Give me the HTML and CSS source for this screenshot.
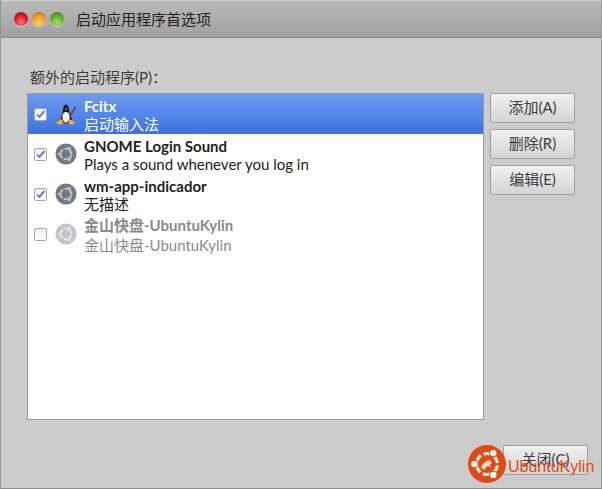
FILE: index.html
```html
<!DOCTYPE html>
<html>
<head>
  <title>启动应用程序首选项</title>
  <link rel="stylesheet" href="styles.css">
</head>
<body>

<div class="window">
  <div class="titlebar">
    <span class="dot red"></span>
    <span class="dot orange"></span>
    <span class="dot green"></span>
    <span class="title">启动应用程序首选项</span>
  </div>

  <div class="content">
    <div class="label">额外的启动程序(P)：</div>
    <div class="main">
      <div class="list">
        <div class="row selected">
          <span class="check on"><svg viewBox="0 0 13 13"><path d="M2.500 6.500 5.300 9.500 11 2.500" /></svg></span>
          <svg class="icon" viewBox="0 0 24 24">
            <path d="M17 13 22.500 4.500" stroke="#6b4120" stroke-width="1.800" fill="none"/>
            <path d="M6 19c0-3 1.500-5 2.200-8C8.800 8 8.300 2.500 12 1.500c3.700 1 3.200 6.500 3.800 9.500.7 3 2.700 5 2.700 8l-2 3H8z" fill="#17171c"/>
            <ellipse cx="12" cy="15.500" rx="4" ry="6" fill="#f4f2ec"/>
            <path d="M10.600 6h2.800l-1.400 1.800z" fill="#f0b020"/>
            <path d="M1 21.500 7.500 17.500 9.500 22.500 5 23.500zM22 21.500 16 17.500 14.500 22.500 19 23.500z" fill="#f5b618"/>
          </svg>
          <div class="text">
            <div class="name">Fcitx</div>
            <div class="desc">启动输入法</div>
          </div>
        </div>
        <div class="row">
          <span class="check on"><svg viewBox="0 0 13 13"><path d="M2.500 6.500 5.300 9.500 11 2.500" /></svg></span>
          <svg class="icon ubuntu" viewBox="0 0 24 24">
            <circle class="disc" cx="12" cy="12" r="11.500"/>
            <circle class="ring" cx="12" cy="12" r="5.800"/>
            <circle class="node" cx="5" cy="12" r="2"/>
            <circle class="node" cx="15.500" cy="5.900" r="2"/>
            <circle class="node" cx="15.500" cy="18.100" r="2"/>
          </svg>
          <div class="text">
            <div class="name">GNOME Login Sound</div>
            <div class="desc">Plays a sound whenever you log in</div>
          </div>
        </div>
        <div class="row">
          <span class="check on"><svg viewBox="0 0 13 13"><path d="M2.500 6.500 5.300 9.500 11 2.500" /></svg></span>
          <svg class="icon ubuntu" viewBox="0 0 24 24">
            <circle class="disc" cx="12" cy="12" r="11.500"/>
            <circle class="ring" cx="12" cy="12" r="5.800"/>
            <circle class="node" cx="5" cy="12" r="2"/>
            <circle class="node" cx="15.500" cy="5.900" r="2"/>
            <circle class="node" cx="15.500" cy="18.100" r="2"/>
          </svg>
          <div class="text">
            <div class="name">wm-app-indicador</div>
            <div class="desc">无描述</div>
          </div>
        </div>
        <div class="row disabled">
          <span class="check"></span>
          <svg class="icon ubuntu" viewBox="0 0 24 24">
            <circle class="disc" cx="12" cy="12" r="11.500"/>
            <circle class="ring" cx="12" cy="12" r="5.800"/>
            <circle class="node" cx="5" cy="12" r="2"/>
            <circle class="node" cx="15.500" cy="5.900" r="2"/>
            <circle class="node" cx="15.500" cy="18.100" r="2"/>
          </svg>
          <div class="text">
            <div class="name">金山快盘-UbuntuKylin</div>
            <div class="desc">金山快盘-UbuntuKylin</div>
          </div>
        </div>
      </div>
      <div class="buttons">
        <button>添加(A)</button>
        <button>删除(R)</button>
        <button>编辑(E)</button>
      </div>
    </div>
    <div class="footer">
      <button>关闭(C)</button>
    </div>
  </div>
</div>

<div class="watermark">
  <svg class="logo" viewBox="0 0 38 38">
    <circle cx="19" cy="19" r="19" fill="#e14b12"/>
    <circle class="logo-ring" cx="19" cy="19" r="10.500"/>
    <circle class="logo-node" cx="6.500" cy="19" r="3.800"/>
    <circle class="logo-node" cx="25.300" cy="8.100" r="3.800"/>
    <circle class="logo-node" cx="25.300" cy="29.900" r="3.800"/>
    <path d="M13 23c1-4 4-7 9-8l2 3-2 1 1 5-2-3-3 1-1 3z" fill="#f6d9cb"/>
  </svg>
  <span class="brand">UbuntuKylin</span>
</div>

</body>
</html>
```

FILE: styles.css
```css
html, body {
  margin: 0;
  height: 489px;
  overflow: hidden;
}
body {
  position: relative;
  background: #cccccc;
  font-family: Lato, "Noto Sans CJK SC", sans-serif;
  font-size: 15px;
  color: #3c3c3c;
}
.window {
  height: 489px;
  box-sizing: border-box;
  border-left: 1px solid #969696;
  border-right: 1px solid #969696;
  border-bottom: 1px solid #8f8f8f;
  display: flex;
  flex-direction: column;
}
.titlebar {
  height: 38px;
  flex: none;
  box-sizing: border-box;
  padding-left: 13px;
  display: flex;
  align-items: center;
  gap: 4px;
  background: linear-gradient(#bababa, #a0a0a0);
  border-top: 1px solid #d0d0ce;
  border-bottom: 1px solid #8a8a8a;
}
.dot {
  width: 14px;
  height: 14px;
  border-radius: 50%;
  box-shadow: 0 1px 0 #d8d8d8;
}
.red { background: radial-gradient(circle at 50% 75%, #ff7078, #d8101e 60%, #7c1014); }
.orange { background: radial-gradient(circle at 50% 75%, #ffd850, #f0902a 60%, #9c5a18); }
.green { background: radial-gradient(circle at 50% 75%, #a8e060, #5aa82a 60%, #2f6a18); }
.title {
  margin: -2px 0 0 8px;
  font-size: 15px;
  color: #222;
}
.content {
  flex: 1;
  display: flex;
  flex-direction: column;
  padding: 29px 13px 14px 26px;
}
.label {
  height: 26px;
  flex: none;
  padding-left: 3px;
  line-height: 20px;
}
.main {
  display: flex;
  flex: none;
  gap: 6px;
}
.list {
  width: 457px;
  height: 327px;
  box-sizing: border-box;
  background: #fff;
  border: 1px solid #9a9a9a;
  flex: none;
}
.row {
  height: 40px;
  display: flex;
  align-items: center;
  color: #222;
}
.row.selected {
  background: linear-gradient(#6d9bf1, #3e71de);
  color: #fff;
}
.row.disabled { color: #8a8a8a; }
.check {
  width: 11px;
  height: 11px;
  margin-left: 6px;
  border: 1px solid #a8a8a8;
  border-radius: 2px;
  background: linear-gradient(#ececec, #fff);
  flex: none;
}
.check svg {
  display: block;
  width: 11px;
  height: 11px;
  fill: none;
  stroke: #4a6fdc;
  stroke-width: 2;
}
.icon {
  width: 22px;
  height: 22px;
  margin-left: 8px;
  flex: none;
}
.ubuntu .disc { fill: #717a82; }
.ubuntu .ring {
  fill: none;
  stroke: #c4c8cb;
  stroke-width: 2.200;
  stroke-dasharray: 10.400 1.750;
  stroke-dashoffset: -0.875;
}
.ubuntu .node { fill: #c4c8cb; stroke: #717a82; stroke-width: .4; }
.disabled .ubuntu .disc { fill: #c3c6c8; }
.disabled .ubuntu .ring { stroke: #e6e7e8; }
.disabled .ubuntu .node { fill: #e6e7e8; stroke: #c3c6c8; }
.text {
  margin-left: 7px;
  padding-top: 1px;
  line-height: 18px;
}
.name {
  font-weight: bold;
}
.disabled .text {
  padding-top: 3px;
  line-height: 19.500px;
}
.buttons {
  display: flex;
  flex-direction: column;
  gap: 6px;
}
button {
  width: 85px;
  height: 30px;
  padding: 0 0 3px;
  background: linear-gradient(#f0f0f0, #d4d4d4);
  border: 1px solid #a0a0a0;
  border-radius: 2px;
  font: inherit;
  color: #3c3c3c;
}
.footer {
  margin-top: 25px;
  display: flex;
  justify-content: flex-end;
}
.watermark {
  position: absolute;
  left: 468px;
  top: 445px;
  display: flex;
  align-items: center;
  gap: 2px;
}
.logo {
  width: 38px;
  height: 38px;
}
.logo-ring {
  fill: none;
  stroke: #fff;
  stroke-width: 3;
  stroke-dasharray: 19 3;
  stroke-dashoffset: -1.500;
}
.logo-node {
  fill: #fff;
  stroke: #e14b12;
  stroke-width: 1.200;
}
.brand {
  font-family: "Liberation Sans", sans-serif;
  font-size: 16px;
  color: #e14b12;
  margin-top: 6px;
}
```
